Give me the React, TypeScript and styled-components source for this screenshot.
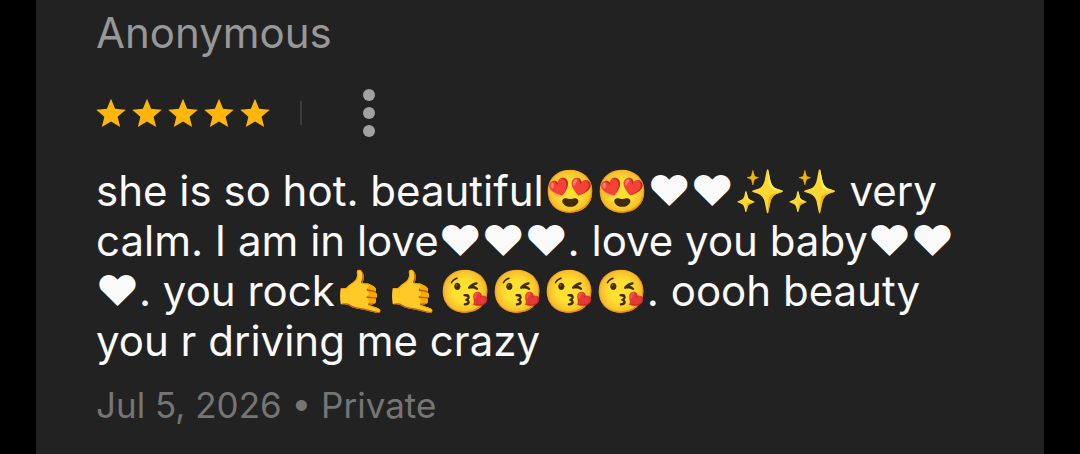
import React from 'react';
import styled, { createGlobalStyle } from 'styled-components';

const GlobalStyle = createGlobalStyle`
  * {
    box-sizing: border-box;
  }
  body {
    margin: 0;
    background: #000;
    font-family: Inter, 'Noto Sans', sans-serif;
  }
`;

const Page = styled.main`
  min-height: 100vh;
  padding: 0 36px;
  background: #000;
  display: flex;
`;

const Review = styled.article`
  flex: 1;
  min-width: 0;
  padding: 8px 60px 24px;
  background: #222;
`;

const Author = styled.h2`
  margin: 0;
  color: #989898;
  font-size: 42px;
  font-weight: 400;
  line-height: 50px;
`;

const RatingRow = styled.div`
  display: flex;
  align-items: center;
  height: 50px;
  margin: 30px 0 28px;
`;

const Stars = styled.div`
  display: flex;
  gap: 6px;
`;

const StarIcon = styled.svg`
  display: block;
  width: 30px;
  height: 30px;
  fill: #ffb60a;
`;

const Divider = styled.span`
  width: 2px;
  height: 24px;
  margin-left: 30px;
  background: #3c3c3c;
`;

const MenuButton = styled.button`
  display: flex;
  align-items: center;
  justify-content: center;
  width: 48px;
  height: 50px;
  margin-left: 43px;
  padding: 0;
  border: 0;
  background: none;
  cursor: pointer;
`;

const DotsIcon = styled.svg`
  display: block;
  width: 12px;
  height: 48px;
  fill: #a2a2a2;
`;

const Comment = styled.p`
  margin: 0;
  color: #fafafa;
  font-size: 42px;
  line-height: 50px;
`;

const Meta = styled.p`
  margin: 14px 0 0;
  color: #757575;
  font-size: 35px;
  line-height: 50px;
`;

const Star = () => (
  <StarIcon viewBox="0 0 30 30" aria-hidden="true">
    <path d="M15 .8 19.1 10.8 29.8 11.7 21.6 18.7 24.2 29 15 23.4 5.8 29 8.4 18.7.2 11.7 10.9 10.8Z" />
  </StarIcon>
);

export default function App() {
  return (
    <>
      <GlobalStyle />
      <Page>
        <Review>
          <Author>Anonymous</Author>
          <RatingRow>
            <Stars role="img" aria-label="5 out of 5 stars">
              {[1, 2, 3, 4, 5].map((n) => (
                <Star key={n} />
              ))}
            </Stars>
            <Divider />
            <MenuButton type="button" aria-label="More options">
              <DotsIcon viewBox="0 0 12 48" aria-hidden="true">
                <circle cx="6" cy="6" r="6" />
                <circle cx="6" cy="24" r="6" />
                <circle cx="6" cy="42" r="6" />
              </DotsIcon>
            </MenuButton>
          </RatingRow>
          <Comment>
            she is so hot. beautiful😍😍❤❤✨✨ very
            <br />
            calm. I am in love❤❤❤. love you baby❤❤
            <br />
            ❤. you rock🤙🤙😘😘😘😘. oooh beauty
            <br />
            you r driving me crazy
          </Comment>
          <Meta>Jul 5, 2026 • Private</Meta>
        </Review>
      </Page>
    </>
  );
}
